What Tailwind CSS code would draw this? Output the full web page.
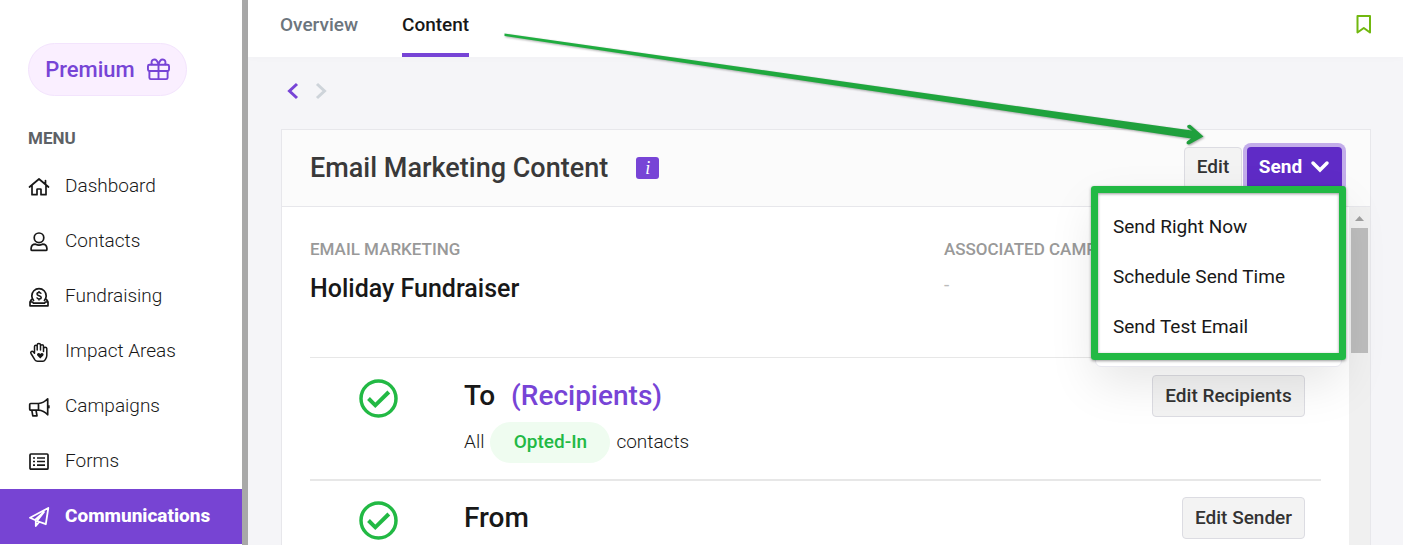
<!DOCTYPE html>
<html lang="en">
<head>
  <meta charset="UTF-8" />
  <meta name="viewport" content="width=device-width, initial-scale=1.0" />
  <title>Email Marketing Content</title>
  <script src="https://cdn.jsdelivr.net/npm/@tailwindcss/browser@4"></script>
</head>
<body class="relative flex h-screen overflow-hidden bg-[#f5f5f8] font-['Roboto',sans-serif] text-[#181818]">

  <!-- Sidebar -->
  <aside class="w-[248px] shrink-0 border-r-6 border-[#a8a8a8] bg-white pt-[43px]">
    <a href="#" class="ml-7 inline-flex h-[53px] w-[159px] items-center justify-center gap-3 rounded-full border border-[#f3e4fd] bg-[#faefff] text-[22px] font-medium text-[#7744d6]">
      Premium
      <svg class="size-[23px]" viewBox="0 0 24 24" fill="none" stroke="currentColor" stroke-width="2" stroke-linejoin="round">
        <rect x="1" y="7" width="22" height="6.500" rx="1.500" />
        <path d="M2.500 13.500v7a1.500 1.500 0 0 0 1.500 1.500h16a1.500 1.500 0 0 0 1.500-1.500v-7M12 7v15M12 7C11 3 9.500 1.500 7.800 1.500 4.500 1.500 4 5.500 5.500 7M12 7c1-4 2.500-5.500 4.200-5.500C19.500 1.500 20 5.500 18.500 7" />
      </svg>
    </a>
    <h2 class="mt-8 ml-7 text-[17px] leading-5 font-bold text-[#5d6166]">MENU</h2>
    <nav class="mt-[11px] text-[19px] font-light">
      <a href="#" class="flex h-[55px] items-center gap-[15px] pl-7">
        <svg class="size-[22px]" viewBox="0 0 22 22" fill="none" stroke="currentColor" stroke-width="1.700" stroke-linejoin="round" stroke-linecap="round">
          <path d="M1.500 11 11 3l9.500 8M4 9.500v9.200h5v-5.200q0-.5.500-.5h3q.5 0 .5.500v5.200h5V9.500M17.500 8V4.500" />
        </svg>
        Dashboard
      </a>
      <a href="#" class="flex h-[55px] items-center gap-[15px] pl-7">
        <svg class="size-[22px]" viewBox="0 0 22 22" fill="none" stroke="currentColor" stroke-width="1.700" stroke-linejoin="round">
          <circle cx="11" cy="6.800" r="4.800" />
          <path d="M7.500 13.200C5 13.200 3.300 14.900 3.100 17.400v1q0 1 1 1h13.800q1 0 1-1v-1c-.2-2.500-1.900-4.200-4.400-4.200-2 1-5 1-7 0z" />
        </svg>
        Contacts
      </a>
      <a href="#" class="flex h-[55px] items-center gap-[15px] pl-7">
        <svg class="size-[22px]" viewBox="0 0 22 22" fill="none" stroke="currentColor" stroke-width="1.700" stroke-linejoin="round">
          <path d="M6 15a7.200 7.200 0 1 1 10 0" />
          <path d="M4.500 13.500H3.500L2 16v3.800h18V16l-1.500-2.500h-1M2 16h2.500l1 1.200h11l1-1.200H20" />
          <path d="M13.200 7.800C12.900 7 12.200 6.600 11 6.600c-1.200 0-2 .5-2 1.500 0 2.200 4.200 1 4.200 3.300 0 1-.9 1.500-2.200 1.500-1.200 0-2-.5-2.200-1.500M11 5v1.600M11 12.900v1.600" stroke-width="1.500" />
        </svg>
        Fundraising
      </a>
      <a href="#" class="flex h-[55px] items-center gap-[15px] pl-7">
        <svg class="size-[22px]" viewBox="0 0 22 22" fill="none" stroke="currentColor" stroke-width="1.500" stroke-linejoin="round" stroke-linecap="round">
          <path d="M6.500 11.500V5.500c0-1.700 2.700-1.700 2.700 0V9 4c0-2 3.300-2 3.300 0v5V5c0-1.700 3-1.700 3 0v5.500V7.500c0-1.600 3.300-1.600 3.300 0V14.500c0 2-.8 2.800-1.800 4.500-.5.900-1 1.200-2 1.200H9.500c-1.200 0-2-.5-2.600-1.400L3 12.500C2 10.800 4 9.500 5.200 10.800L6.500 12.300" />
          <path fill="currentColor" stroke="none" d="M12.300 17.500 9.300 14.500c-1.200-1.700 1.500-3.500 3-1.500 1.500-2 4.200-.2 3 1.500z" />
        </svg>
        Impact Areas
      </a>
      <a href="#" class="flex h-[55px] items-center gap-[15px] pl-7">
        <svg class="size-[22px]" viewBox="0 0 22 22" fill="none" stroke="currentColor" stroke-width="1.700" stroke-linejoin="round">
          <path d="M2.700 7.500H10.500c4-.2 6.500-1.700 9.200-4.700v16c-2.700-3-5.200-4.500-9.200-4.700H2.700q-1 0-1-1V8.500q0-1 1-1zM10.500 7.500v6.600M3.800 14.100l1 5.700h4.200l-1-5.700" />
          <path d="M20.700 9.300v3" stroke-width="2" />
        </svg>
        Campaigns
      </a>
      <a href="#" class="flex h-[55px] items-center gap-[15px] pl-7">
        <svg class="size-[22px]" viewBox="0 0 22 22" fill="none" stroke="currentColor" stroke-width="1.700">
          <rect x="2" y="3" width="18" height="15.200" rx="1" />
          <path d="M9 7H17M9 10.500H17M9 14.200H17M5 7h2M5 10.500h2M5 14.200h2" />
        </svg>
        Forms
      </a>
      <a href="#" class="flex h-[55px] items-center gap-[15px] bg-[#7744d3] pl-7 font-extrabold text-white">
        <svg class="size-[22px]" viewBox="0 0 22 22" fill="none" stroke="currentColor" stroke-width="1.800" stroke-linejoin="round">
          <path d="M20.300 2 2 11.800l5 2.200L16 6 9 15l8.800 3.200zM7.800 14.500V20l3.200-3.800" />
        </svg>
        Communications
      </a>
    </nav>
  </aside>

  <div class="flex min-w-0 flex-1 flex-col">
    <!-- Tabs -->
    <header class="flex h-[57px] shrink-0 items-center justify-between bg-white pr-[30px] pl-8 shadow-[0_1px_8px_rgba(0,0,0,0.02)]">
      <nav class="flex h-full gap-[44px] text-[19px] font-medium">
        <a href="#" class="flex items-center border-b-4 border-transparent pb-[3px] text-[#6c757d]">Overview</a>
        <a href="#" class="flex items-center border-b-4 border-[#7744d6] pb-[3px]">Content</a>
      </nav>
      <button type="button" aria-label="Bookmark" class="mb-2">
        <svg class="h-5 w-[18px]" viewBox="0 0 18 20" fill="none" stroke="#71b80f" stroke-width="2">
          <path d="M2.500 1h12.500v16.500l-6.200-4.500L2.500 17.500z" stroke-linejoin="round" />
        </svg>
      </button>
    </header>

    <main class="flex min-h-0 flex-1 flex-col pr-8 pl-[33px]">
      <div class="flex h-[72px] shrink-0 items-center gap-3 pb-1">
        <button type="button" aria-label="Previous" class="ml-1 text-[#7744d6]">
          <svg class="h-5 w-4" viewBox="0 0 16 20" fill="none" stroke="currentColor" stroke-width="3"><path d="m12 3-7.500 7 7.500 7" /></svg>
        </button>
        <button type="button" aria-label="Next" class="text-[#ced4da]">
          <svg class="h-5 w-4" viewBox="0 0 16 20" fill="none" stroke="currentColor" stroke-width="3"><path d="m4 3 7.500 7-7.500 7" /></svg>
        </button>
      </div>

      <section class="flex min-h-0 flex-1 flex-col border border-b-0 border-[#e7e7eb] bg-white">
        <div class="flex h-[77px] shrink-0 items-center border-b border-[#e7e7eb] bg-[#fbfbfb] pr-7 pl-7">
          <h1 class="text-[27px] font-medium text-[#393939]">Email Marketing Content</h1>
          <button type="button" aria-label="Info" class="ml-7 h-[22px] w-[23px] rounded-[3px] bg-[#7744d6] font-['Liberation_Serif',serif] text-lg leading-5 text-white italic">i</button>
          <div class="ml-auto flex gap-[5px] text-[19px] font-medium">
            <button type="button" class="h-[42px] w-[58px] rounded border border-[#dcdce2] bg-[#f3f3f3] pb-0.5 text-[#333]">Edit</button>
            <!-- Send drop-down -->
            <div class="relative">
              <button type="button" aria-expanded="true" class="flex h-[42px] w-[95px] items-center justify-center gap-2 rounded bg-[#5f2bc6] pb-0.5 font-bold text-white ring-4 ring-[#c3adea]">
                Send
                <svg class="h-4 w-5" viewBox="0 0 20 16" fill="none" stroke="currentColor" stroke-width="3.500" stroke-linecap="round"><path d="m3 4 7 7 7-7" /></svg>
              </button>
              <div class="absolute top-11 right-0 z-10 h-[176px] w-[247px] rounded-md border border-[#e7e7ee] bg-white pt-[10px] font-normal shadow-[0_16px_48px_rgba(0,0,0,0.1)]">
                <a href="#" class="flex h-[50px] items-center pl-[17px]">Send Right Now</a>
                <a href="#" class="flex h-[50px] items-center pl-[17px]">Schedule Send Time</a>
                <a href="#" class="flex h-[50px] items-center pl-[17px]">Send Test Email</a>
              </div>
              <div class="pointer-events-none absolute top-[39px] -right-1 z-20 h-[174px] w-[255px] rounded-[3px] border-[7px] border-[#22b944] shadow-[0_1px_3px_rgba(0,0,0,0.4),inset_0_1px_3px_rgba(0,0,0,0.4)]"></div>
            </div>
          </div>
        </div>

        <div class="flex min-h-0 flex-1">
          <div class="min-w-0 flex-1 overflow-hidden pr-7 pl-7">
            <div class="grid h-[151px] grid-cols-[5fr_3fr] border-b border-[#e7e7e7] pt-8">
              <div>
                <h2 class="text-[17px] leading-5 font-medium text-[#999]">EMAIL MARKETING</h2>
                <p class="mt-[14px] text-[25px] leading-8 font-medium">Holiday Fundraiser</p>
              </div>
              <div class="pl-[2px]">
                <h2 class="text-[17px] leading-5 font-medium whitespace-nowrap text-[#999]">ASSOCIATED CAMPAIGN</h2>
                <p class="mt-[14px] text-[19px] leading-6 text-[#bbb]">-</p>
              </div>
            </div>

            <div class="flex h-[123px] items-start border-b-2 border-[#e7e7e7] pt-[17px] pr-4 pl-[49px]">
              <svg class="mt-1 size-[39px]" viewBox="0 0 39 39" fill="none" stroke="#22b944">
                <circle cx="19.500" cy="19.500" r="17.500" stroke-width="3.500" />
                <path d="m9.500 19.500 6.800 6.800L29.800 13" stroke-width="4" />
              </svg>
              <div class="ml-[66px]">
                <h3 class="flex h-[42px] items-center gap-4 text-[28px] font-medium">To <a href="#" class="text-[#7744d6]">(Recipients)</a></h3>
                <p class="mt-[5px] flex items-center gap-[6px] text-[19px] font-light">
                  All
                  <span class="flex h-[41px] w-[120px] items-center justify-center rounded-full bg-[#effcf0] font-medium text-[#22b944]">Opted-In</span>
                  contacts
                </p>
              </div>
              <button type="button" class="ml-auto h-[42px] w-[153px] rounded border border-[#dcdce2] bg-[#f3f3f3] text-[19px] font-medium text-[#333]">Edit Recipients</button>
            </div>

            <div class="flex h-[123px] items-start pt-4 pr-4 pl-[49px]">
              <svg class="mt-1 size-[39px]" viewBox="0 0 39 39" fill="none" stroke="#22b944">
                <circle cx="19.500" cy="19.500" r="17.500" stroke-width="3.500" />
                <path d="m9.500 19.500 6.800 6.800L29.800 13" stroke-width="4" />
              </svg>
              <h3 class="ml-[66px] flex h-[42px] items-center text-[28px] font-medium">From</h3>
              <button type="button" class="ml-auto h-[42px] w-[123px] rounded border border-[#dcdce2] bg-[#f3f3f3] text-[19px] font-medium text-[#333]">Edit Sender</button>
            </div>
          </div>

          <!-- Scrollbar -->
          <div class="flex w-[21px] shrink-0 flex-col items-center bg-[#f0f0f0] pt-[9px]">
            <svg class="h-[5px] w-[9px]" viewBox="0 0 9 5" fill="#a0a0a0"><path d="M0 5 4.500 0 9 5z" /></svg>
            <div class="mt-[7px] h-[125px] w-[17px] bg-[#bdbdbd]"></div>
          </div>
        </div>
      </section>
    </main>
  </div>

  <!-- Arrow to the Send button -->
  <svg class="pointer-events-none absolute top-0 left-[500px] z-30 h-[150px] w-[710px] drop-shadow-[1px_1px_1px_rgba(0,0,0,0.35)]" viewBox="0 0 710 150">
    <defs>
      <linearGradient id="arrow" x1="0" y1="0" x2="0" y2="1">
        <stop offset="0" stop-color="#1fae3f" />
        <stop offset="1" stop-color="#1f9e3c" />
      </linearGradient>
    </defs>
    <path fill="url(#arrow)" d="M4.500 33.500 580 115l112 15.500-4-2.500c-2-1.500 0-4 2.500-3L703.500 136.500 689 144.500c-3 0-3-2.500-1.500-3.500l3.500-2.500L580 122 4.500 36z" />
  </svg>
</body>
</html>
